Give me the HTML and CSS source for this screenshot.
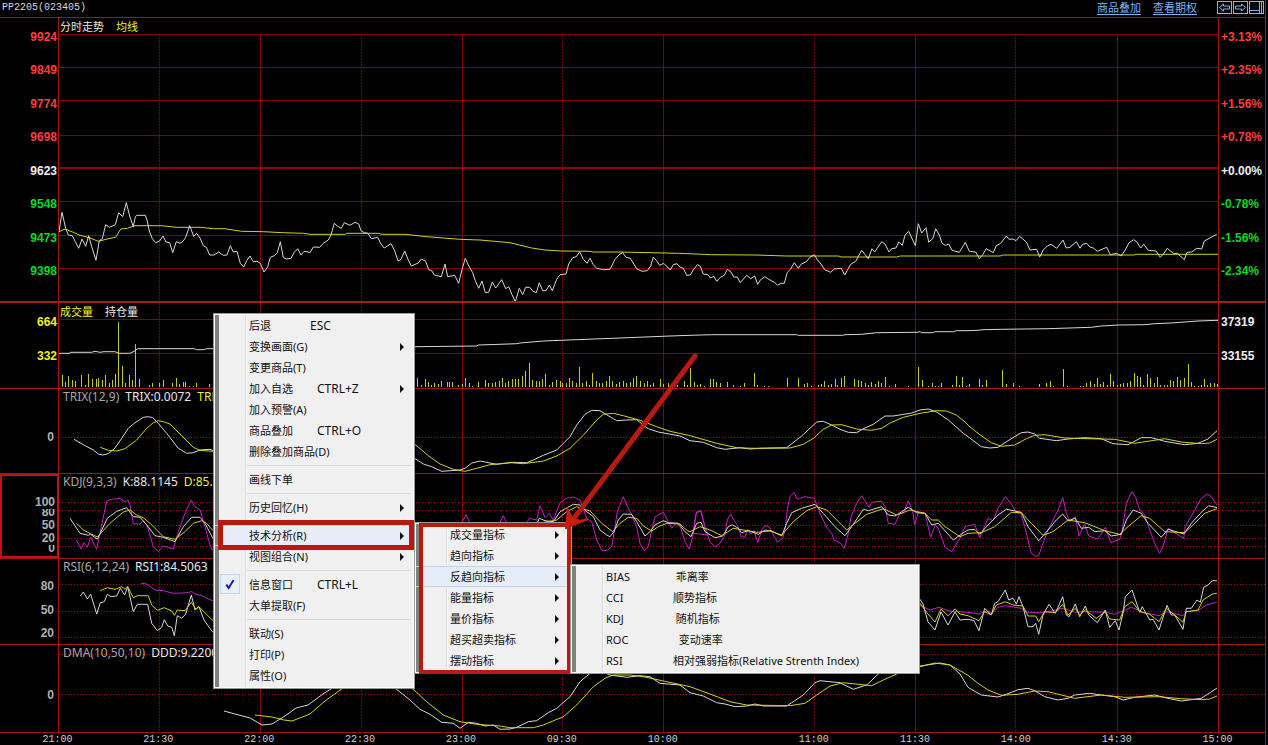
FILE: index.html
```
<!DOCTYPE html>
<html lang="zh-CN">
<head>
<meta charset="utf-8">
<title>PP2205 分时走势</title>
<link rel="stylesheet" href="styles.css">
</head>
<body>
<main class="terminal">
  <header class="topbar">
    <h1 class="contract">PP2205(023405)</h1>
    <nav class="links">
      <a href="#overlay">商品叠加</a>
      <a href="#options">查看期权</a>
    </nav>
    <div class="tools">
      <button class="tool" aria-label="左移"><svg viewBox="0 0 15 13"><rect x=".5" y=".5" width="14" height="12"/><path d="M2.5 6.5 6.500 3v2h6v3h-6v2z"/></svg></button>
      <button class="tool" aria-label="右移"><svg viewBox="0 0 15 13"><rect x=".5" y=".5" width="14" height="12"/><path d="M12.500 6.500 8.500 3v2h-6v3h6v2z"/></svg></button>
      <button class="tool" aria-label="侧栏"><svg viewBox="0 0 15 13"><rect x=".5" y=".5" width="14" height="12"/><path d="M1 9.500h9M10.500 1v11M12.500 1v11"/></svg></button>
    </div>
  </header>

  <section class="panel panel-price">
    <div class="axis axis-left">
      <span class="up">9924</span><span class="up">9849</span><span class="up">9774</span><span class="up">9698</span><span class="flat">9623</span><span class="down">9548</span><span class="down">9473</span><span class="down">9398</span>
    </div>
    <svg class="plot" id="price" viewBox="59 18 1159 283" preserveAspectRatio="none">
      <path class="grid" d="M59 34.500H1218M59 67.500H1218M59 100.500H1218M59 135.500H1218M59 201.500H1218M59 235.500H1218M59 268.500H1218"/>
      <path class="grid base" d="M59 167.500H1218"/>
      <path class="grid" d="M260.500 34V301M462.500 34V301M663.500 34V301M915.500 34V301M1117.500 34V301"/>
      <path class="grid minor" d="M159.500 34V301M361.500 34V301M562.500 34V301M814.500 34V301M1015.500 34V301"/>
    </svg>
    <p class="legend cjk"><span>分时走势</span><span class="yellow">均线</span></p>
    <div class="axis axis-right">
      <span class="up">+3.13%</span><span class="up">+2.35%</span><span class="up">+1.56%</span><span class="up">+0.78%</span><span class="flat">+0.00%</span><span class="down">-0.78%</span><span class="down">-1.56%</span><span class="down">-2.34%</span>
    </div>
  </section>

  <section class="panel panel-volume">
    <div class="axis axis-left"><span class="yellow">664</span><span class="yellow">332</span></div>
    <svg class="plot" id="volume" viewBox="59 303 1159 85" preserveAspectRatio="none">
      <path class="grid" d="M59 319.500H1218M59 353.500H1218"/>
      <path class="grid" d="M260.500 303V388M462.500 303V388M663.500 303V388M915.500 303V388M1117.500 303V388"/>
      <path class="grid minor" d="M159.500 303V388M361.500 303V388M562.500 303V388M814.500 303V388M1015.500 303V388"/>
    </svg>
    <p class="legend cjk"><span class="yellow">成交量</span><span>持仓量</span></p>
    <div class="axis axis-right"><span class="flat">37319</span><span class="flat">33155</span></div>
  </section>

  <section class="panel panel-trix">
    <div class="axis axis-left study"><span>0</span></div>
    <svg class="plot" id="trix" viewBox="59 389 1159 84" preserveAspectRatio="none">
      <path class="grid dots" d="M59 437.500H1218"/>
      <path class="grid" d="M260.500 389V473M462.500 389V473M663.500 389V473M915.500 389V473M1117.500 389V473"/>
      <path class="grid minor" d="M159.500 389V473M361.500 389V473M562.500 389V473M814.500 389V473M1015.500 389V473"/>
    </svg>
    <p class="legend"><span class="name">TRIX(12,9)</span><span>TRIX:0.0072</span><span class="yellow">TRMA</span></p>
    <div class="axis axis-right tail"><svg viewBox="0 389 46 84" preserveAspectRatio="none"><path class="grid dots" d="M0 437.500H46"/></svg></div>
  </section>

  <section class="panel panel-kdj">
    <div class="axis axis-left study selected"><span>100</span><span class="cut">80</span><span class="apart">50</span><span>20</span><span class="cut">0</span></div>
    <svg class="plot" id="kdj" viewBox="59 474 1159 84" preserveAspectRatio="none">
      <path class="grid dots" d="M59 502.500H1218M59 510.500H1218M59 525.500H1218M59 538.500H1218M59 546.500H1218"/>
      <path class="grid" d="M260.500 474V558M462.500 474V558M663.500 474V558M915.500 474V558M1117.500 474V558"/>
      <path class="grid minor" d="M159.500 474V558M361.500 474V558M562.500 474V558M814.500 474V558M1015.500 474V558"/>
    </svg>
    <p class="legend"><span class="name">KDJ(9,3,3)</span><span>K:88.1145</span><span class="yellow">D:85.1</span></p>
    <div class="axis axis-right tail"><svg viewBox="0 474 46 84" preserveAspectRatio="none"><path class="grid dots" d="M0 502.500H46M0 510.500H46M0 525.500H46M0 538.500H46M0 546.500H46"/></svg></div>
  </section>

  <section class="panel panel-rsi">
    <div class="axis axis-left study"><span>80</span><span>50</span><span>20</span></div>
    <svg class="plot" id="rsi" viewBox="59 559 1159 85" preserveAspectRatio="none">
      <path class="grid dots" d="M59 584.500H1218M59 611.500H1218M59 637.500H1218"/>
      <path class="grid" d="M260.500 559V644M462.500 559V644M663.500 559V644M915.500 559V644M1117.500 559V644"/>
      <path class="grid minor" d="M159.500 559V644M361.500 559V644M562.500 559V644M814.500 559V644M1015.500 559V644"/>
    </svg>
    <p class="legend"><span class="name">RSI(6,12,24)</span><span>RSI1:84.5063</span><span class="yellow">RSI2</span></p>
    <div class="axis axis-right tail"><svg viewBox="0 559 46 85" preserveAspectRatio="none"><path class="grid dots" d="M0 584.500H46M0 611.500H46M0 637.500H46"/></svg></div>
  </section>

  <section class="panel panel-dma">
    <div class="axis axis-left study"><span>0</span></div>
    <svg class="plot" id="dma" viewBox="59 645 1159 87" preserveAspectRatio="none">
      <path class="grid dots" d="M59 654.500H1218M59 694.500H1218"/>
      <path class="grid" d="M260.500 645V732M462.500 645V732M663.500 645V732M915.500 645V732M1117.500 645V732"/>
      <path class="grid minor" d="M159.500 645V732M361.500 645V732M562.500 645V732M814.500 645V732M1015.500 645V732"/>
    </svg>
    <p class="legend"><span class="name">DMA(10,50,10)</span><span>DDD:9.2200</span></p>
    <div class="axis axis-right tail"><svg viewBox="0 645 46 87" preserveAspectRatio="none"><path class="grid dots" d="M0 654.500H46M0 694.500H46"/></svg></div>
  </section>

  <footer class="times">
    <time>21:00</time><time>21:30</time><time>22:00</time><time>22:30</time><time>23:00</time><time>09:30</time><time>10:00</time><time class="after-break">11:00</time><time>11:30</time><time>14:00</time><time>14:30</time><time>15:00</time>
  </footer>
</main>

<div class="menu menu-main" role="menu">
  <button class="item" role="menuitem"><span>后退</span><kbd class="far">ESC</kbd></button>
  <button class="item more" role="menuitem"><span>变换画面(G)</span></button>
  <button class="item" role="menuitem"><span>变更商品(T)</span></button>
  <button class="item more" role="menuitem"><span>加入自选</span><kbd>CTRL+Z</kbd></button>
  <button class="item" role="menuitem"><span>加入预警(A)</span></button>
  <button class="item" role="menuitem"><span>商品叠加</span><kbd>CTRL+O</kbd></button>
  <button class="item" role="menuitem"><span>删除叠加商品(D)</span></button>
  <hr>
  <button class="item" role="menuitem"><span>画线下单</span></button>
  <hr>
  <button class="item more" role="menuitem"><span>历史回忆(H)</span></button>
  <hr>
  <button class="item more active marked" role="menuitem"><span>技术分析(R)</span></button>
  <button class="item more" role="menuitem"><span>视图组合(N)</span></button>
  <hr>
  <button class="item" role="menuitemcheckbox" aria-checked="true"><svg class="tick" viewBox="0 0 20 20"><path d="M6 10.500 8.500 14.500 14 5.500"/></svg><span>信息窗口</span><kbd>CTRL+L</kbd></button>
  <button class="item" role="menuitem"><span>大单提取(F)</span></button>
  <hr>
  <button class="item" role="menuitem"><span>联动(S)</span></button>
  <button class="item" role="menuitem"><span>打印(P)</span></button>
  <button class="item" role="menuitem"><span>属性(O)</span></button>
</div>

<div class="menu menu-sub" role="menu">
  <button class="item more" role="menuitem"><span>成交量指标</span></button>
  <button class="item more" role="menuitem"><span>趋向指标</span></button>
  <button class="item more active" role="menuitem"><span>反趋向指标</span></button>
  <button class="item more" role="menuitem"><span>能量指标</span></button>
  <button class="item more" role="menuitem"><span>量价指标</span></button>
  <button class="item more" role="menuitem"><span>超买超卖指标</span></button>
  <button class="item more" role="menuitem"><span>摆动指标</span></button>
</div>

<div class="menu menu-leaf" role="menu">
  <button class="item" role="menuitem"><span class="code">BIAS</span><span> 乖离率</span></button>
  <button class="item" role="menuitem"><span class="code">CCI</span><span>顺势指标</span></button>
  <button class="item" role="menuitem"><span class="code">KDJ</span><span> 随机指标</span></button>
  <button class="item" role="menuitem"><span class="code">ROC</span><span>  变动速率</span></button>
  <button class="item" role="menuitem"><span class="code">RSI</span><span>相对强弱指标(Relative Strenth Index)</span></button>
</div>

<svg class="pointer" viewBox="0 0 140 184" aria-hidden="true">
  <path class="shaft" d="M133 9 13 170"/>
  <path class="head" d="M4 181 6 163 10 171 18 174 26 172 16 176z"/>
</svg>

<script src="charts.js"></script>
</body>
</html>
```
FILE: styles.css
```
* { box-sizing: border-box; }
html, body { height: 100%; }
body {
  margin: 0;
  background: #000;
  color: #e8e8e8;
  font: 12px/14px "Noto Sans", "Noto Sans CJK SC", sans-serif;
  overflow: hidden;
  position: relative;
}
p, h1 { margin: 0; }
button { font: inherit; color: inherit; padding: 0; border: 0; background: none; }

.terminal {
  display: grid;
  grid-template-rows: 18px 285fr 86fr 85fr 85fr 86fr 88fr 12px;
  grid-template-columns: minmax(0, 1fr);
  height: 100%;
  min-height: 600px;
  margin-right: 2px;
  border-right: 1px solid #b01414;
}

.topbar {
  display: flex;
  align-items: center;
  padding: 0 1px 2px 2px;
  border-bottom: 1px solid #a01414;
}
.contract {
  flex: 1;
  font: 10px/14px "Liberation Mono", monospace;
  color: #d8d8d8;
}
.links { display: flex; gap: 12px; margin-right: 20px; }
.links a { color: #7db4f0; font-size: 11px; text-underline-offset: 2px; }
.tools { display: flex; gap: 1px; }
.tool { width: 15px; height: 13px; display: block; }
.tool svg { display: block; width: 15px; height: 13px; fill: none; stroke: #82b4ea; }

.panel {
  display: grid;
  grid-template-columns: 59px minmax(0, 1fr) 47px;
  grid-template-rows: minmax(0, 1fr);
  min-height: 0;
  border-bottom: 1px solid #a01414;
}
.panel-price { border-bottom: 2px solid #a02020; }

.plot { grid-area: 1 / 2; width: 100%; height: 100%; display: block; }
.legend {
  grid-area: 1 / 2;
  display: flex;
  gap: 6px;
  padding-left: 4px;
  line-height: 16px;
  white-space: nowrap;
  align-self: start;
}
.legend.cjk { gap: 12px; padding: 1px 0 0 1px; font-size: 11px; }
.name { color: #a8a8a8; }
.yellow { color: #f0f020; }

.axis {
  display: flex;
  flex-direction: column;
  justify-content: space-between;
  min-height: 0;
  font: bold 12px/14px "Liberation Sans", sans-serif;
}
.axis-left { grid-area: 1 / 1; align-items: flex-end; padding-right: 1px; border-right: 1px solid #a01414; }
.axis-right { grid-area: 1 / 3; padding-left: 2px; border-left: 1px solid #a01414; }
.axis-right.tail { padding: 0; }
.tail svg { display: block; width: 100%; height: 100%; }
.study { padding-right: 4px; color: #b0b0b0; justify-content: center; }
.panel-price .axis { padding-top: 12px; padding-bottom: 23px; }
.panel-volume .axis { padding-top: 12px; padding-bottom: 25px; }
.panel-trix .study, .panel-dma .study { padding-top: 12px; }
.panel-rsi .study { justify-content: space-between; padding-top: 20px; padding-bottom: 4px; }
.panel-kdj .study { justify-content: flex-start; padding: 20px 2px 0 0; line-height: 13px; }
.selected { border: 2px solid #c01414; }
.cut { display: flex; align-items: flex-end; height: 8px; line-height: 10px; overflow: hidden; }
.apart { margin-top: 2px; }
.up { color: #ff3c3c; }
.down { color: #00dc1e; }
.flat { color: #f0f0f0; }

.times {
  display: grid;
  grid-template-columns: repeat(7, minmax(0, 2fr)) minmax(0, 3fr) repeat(4, minmax(0, 2fr));
  margin: 0 -3px 0 7px;
  font: 10px/13px "Liberation Mono", monospace;
  color: #d0d0d0;
  text-align: center;
}
.times .after-break { padding-left: 50px; }

.plot path, .tail path { fill: none; vector-effect: non-scaling-stroke; }
.grid { stroke: #860008; shape-rendering: crispEdges; }
.grid.base { stroke: #900008; stroke-width: 2px; }
.grid.minor { stroke: #740008; stroke-dasharray: 2 1; }
.grid.dots { stroke: #a01010; stroke-dasharray: 1 2; }
.curve { stroke-width: 1px; }
.curve.white { stroke: #d8d8d8; }
.curve.gold { stroke: #d2d21e; }
.curve.pink { stroke: #c81ec8; }
.bars { stroke: #c8c81e; stroke-width: 1px; shape-rendering: crispEdges; }

.menu {
  position: absolute;
  color: #101010;
  background: linear-gradient(90deg, #808080 4px, #f0f0f0 4px, #f0f0f0 30px, #dcdcdc 30px, #dcdcdc 31px, #fafafa 31px, #fafafa 32px, #f0f0f0 32px);
  border: 1px solid #fff;
  outline: 1px solid #979797;
  font-size: 11px;
}
.menu-main { left: 214px; top: 314px; width: 200px; padding-bottom: 1px; }
.menu-sub { left: 415px; top: 523px; width: 156px; padding-bottom: 1px; }
.menu-leaf { left: 571px; top: 565px; width: 348px; padding-bottom: 1px; }
.item {
  position: relative;
  display: flex;
  align-items: center;
  width: 100%;
  height: 21px;
  padding-left: 34px;
  white-space: pre;
  text-align: left;
}
.menu hr { height: 1px; margin: 3px 2px 3px 32px; border: 0; background: #d8d8d8; }
.item kbd { font: 12px/14px "Noto Sans", sans-serif; margin-left: 24px; }
.item kbd.far { margin-left: 39px; }
.code { width: 67px; }
.more::after {
  content: "";
  margin-left: auto;
  margin-right: 9px;
  border: 4px solid transparent;
  border-left-color: #101010;
  border-right: 0;
}
.active { background: linear-gradient(90deg, transparent 4px, #e6edf9 4px); box-shadow: inset 0 1px #bcd3f0, inset 0 -1px #bcd3f0; }
.marked::before {
  content: "";
  position: absolute;
  inset: -5px -1px -4px 3px;
  border: 5px solid #b91a10;
}
.menu-sub::after {
  content: "";
  position: absolute;
  inset: -1px -1px -2px 3px;
  border: 4px solid #b91a10;
}
.menu-sub .more::after { margin-right: 11px; }
.tick {
  position: absolute;
  left: 5px;
  top: 0;
  width: 20px;
  height: 20px;
  background: #e8f0fb;
  border: 1px solid #c0d8f4;
  fill: none;
  stroke: #1414a0;
  stroke-width: 2px;
}
.pointer { position: absolute; left: 562px; top: 347px; width: 140px; height: 184px; }
.shaft { fill: none; stroke: #b91a10; stroke-width: 5px; stroke-linecap: round; }
.head { fill: #c81c0e; stroke: #c81c0e; stroke-width: 2px; }
```
FILE: charts.js
```
const NS = "http://www.w3.org/2000/svg";

function add(id, cls, d) {
  const path = document.createElementNS(NS, "path");
  path.setAttribute("class", cls);
  path.setAttribute("d", d);
  document.getElementById(id).appendChild(path);
}

// Each piece is [originX, originY, "x,y x,y ..."], with points in thirds of a unit.
function toPoints([ox, oy, text]) {
  return text.trim().split(/\s+/).map(p => {
    const [x, y] = p.split(",").map(Number);
    return (ox + x / 3).toFixed(1) + " " + (oy + y / 3).toFixed(1);
  });
}
function curve(id, color, ...pieces) {
  add(id, "curve " + color, "M" + pieces.flatMap(toPoints).join("L"));
}
// Bars rise from the bottom of the volume panel; each entry is "x,top".
function bars(ox, oy, text) {
  const d = toPoints([ox, oy, text]).map(p => {
    const [x, y] = p.split(" ");
    return "M" + (Math.floor(x) + 0.5) + " 387V" + Math.round(y);
  });
  add("volume", "bars", d.join(""));
}

curve("price", "gold",
  [0, 0, "177,695 195,687 220,697 240,706 268,713 295,724 325,716 347,712 362,687 382,685 405,677 485,677 530,682 600,682 640,686 675,686 725,694 790,695 850,698 910,700"],
  [310, 170, "0,193 105,193 110,190 205,190 215,193 285,193 350,200 400,204 450,208 510,210 600,218 665,234 705,240 755,243 840,244 850,246 925,246"],
  [620, 170, "0,246 35,247 175,250 275,254 405,255 500,258 655,258 665,261 830,261 840,258 925,258"],
  [930, 170, "0,258 210,258 220,255 610,255 620,253 865,253"]);
curve("price", "white",
  [0, 0, "177,695 186,637 197,685 205,705 217,707 226,725 236,745 246,717 257,739 266,707 275,740 288,781 298,722 307,716 317,674 328,682 346,674 356,638 368,650 379,608 389,648 400,680 406,650 411,646 436,646 441,660 448,693 457,716 467,728 478,724 489,708 498,726 509,728 518,758 529,725 540,730 549,724 557,712 569,677 581,709 590,700 600,714 610,737 619,742 629,765 642,765 656,756 670,766 681,765 691,737 700,756 711,754 721,790 731,801 740,782 750,768 760,785 771,784 781,790 792,816 803,800 811,772 823,767 832,758 841,725 850,772 858,777 873,775 882,758 893,746 903,765 912,754 928,757"],
  [310, 170, "0,248 10,231 29,232 40,220 55,210 63,195 73,160 82,168 94,175 103,158 120,166 135,157 146,162 153,182 163,188 174,190 184,206 203,202 213,222 223,234 243,221 254,242 264,273 273,268 284,243 294,268 304,288 325,279 334,267 347,274 356,299 365,302 373,315 394,320 405,282 413,320 434,316 446,340 455,302 466,265 475,285 488,308 496,332 506,355 516,333 526,368 536,367 547,336 557,354 575,329 587,356 596,350 606,374 616,395 628,355 638,374 647,352 659,352 669,364 679,368 688,338 698,362 708,362 718,345 727,362 740,328 750,314 768,312 776,282 788,263 799,260 809,245 819,266 831,280 840,265 850,284 860,295 881,299 900,298 915,268 928,254"],
  [620, 170, "8,248 18,262 31,265 50,296 66,304 82,302 92,288 100,261 110,272 119,286 131,280 151,300 160,284 171,281 179,291 190,295 200,316 211,315 220,300 232,284 241,289 250,312 264,314 271,324 282,319 290,334 301,322 313,316 322,298 333,306 341,321 352,321 361,338 380,316 392,326 404,318 413,343 421,330 434,320 450,330 463,337 473,346 482,340 493,340 502,307 512,297 523,278 535,295 543,283 560,274 570,262 583,254 592,269 603,282 614,299 632,307 643,297 664,295 674,315 683,299 692,283 707,274 725,241 734,252 745,266 756,236 764,246 785,215 795,222 807,246 815,236 828,234 836,216 847,226 855,196 866,184 886,227 895,161 905,189 918,173 926,217"],
  [930, 170, "8,206 17,176 28,195 36,220 46,226 56,222 66,241 88,247 106,217 118,244 137,246 148,266 158,254 169,236 190,248 198,228 212,220 229,198 237,208 249,207 258,212 269,199 289,216 300,240 320,238 329,261 340,240 352,228 363,223 380,235 399,210 409,234 420,232 439,215 450,235 458,223 470,220 481,232 490,234 502,244 530,232 541,254 560,250 573,258 586,240 597,218 611,209 620,215 632,234 641,223 655,241 678,243 691,262 702,250 712,235 730,250 742,250 763,269 771,247 785,246 800,235 815,237 823,213 840,204 860,193"]);

bars(0, 300, "186,225 196,246 205,228 217,240 226,243 245,225 255,255 265,222 277,237 288,237 295,234 307,240 317,225 328,250 336,240 347,222 356,66 367,198 376,248 388,225 397,240 407,131 418,238 447,255 458,248 478,250 489,241 518,248 529,234 539,252 549,246 557,246 569,258 580,258 590,249 628,252");
bars(410, 340, "23,113 34,135 46,117 55,126 65,134 74,129 85,131 94,122 112,127 117,127 126,127 145,135 158,131 165,114 177,128 186,137 205,127 225,119 235,130 246,130 257,125 267,122 276,115 286,130 295,124 307,117 315,116 325,117 337,108 347,94 358,70 368,121 378,122 388,122 398,117 406,102 418,134 427,127 438,120 450,124 458,130 468,129 477,114 488,124 498,128 508,80 518,130 530,123 537,134 548,99 558,122 568,130 578,128 590,122 599,108 608,122 620,133 629,127 640,122 650,130 661,125 670,114 679,108 690,122 702,130 711,122 722,134 730,130 750,118 760,133 775,128 790,130 802,134 822,122 832,134");
bars(690, 300, "2,205 12,247 21,254 32,252 42,258 61,237 70,237 80,247 92,249 112,247 131,255 152,258 163,250 193,219 202,255 223,258 234,258 293,235 325,233 343,252 352,249 363,258 384,256 395,251 404,244 416,254 424,252 435,238 443,255 455,233 463,228 494,238 506,241 515,244 526,250 536,255 545,247 555,252 566,243 575,250 586,231 597,257 616,253 656,258 685,201 697,241 716,257 727,249 736,257 746,258 755,250 788,255 798,228 808,255 818,231 828,257");
bars(968, 300, "4,253 33,236 44,255 56,241 103,210 115,252 135,249 155,258 214,252 236,250 246,243 257,258 285,207 297,258 338,258 347,258 356,250 367,243 378,252 388,235 397,252 407,247 417,255 428,223 437,243 447,256 458,252 466,248 478,248 487,244 498,219 507,229 518,232 527,255 538,223 547,234 558,250 569,230 578,255 588,256 598,255 608,241 617,244 629,230 637,240 649,234 660,192 669,247 680,258 690,258 700,255 709,236 718,255 727,248 740,250 748,251");
curve("volume", "white",
  [0, 300, "177,160 210,160 211,157 275,157 285,154 300,157 312,155 345,155 357,160 390,160 405,152 413,146 583,146 590,149 610,149 620,146 640,146"],
  [410, 340, "17,20 200,18 205,15 270,13 320,11 330,9 400,3 475,0 630,-6 780,-12"],
  [690, 300, "0,106 65,104 320,104 325,106 458,106 465,104 515,103 560,98 680,97 690,95 695,98 730,98 735,95 790,95 800,92"],
  [968, 300, "0,92 30,91 45,89 100,88 240,86 370,82 400,78 450,75 530,74 560,71 610,69 650,66 690,63 750,61"]);

curve("trix", "white",
  [0, 300, "222,418 250,434 280,450 295,462 308,465 325,461 345,444 365,415 385,385 405,368 430,352 445,350 458,353 475,370 500,400 535,445 560,460 580,458 600,450 630,448 640,452"],
  [410, 340, "17,357 40,372 65,380 95,394 150,390 165,385 185,369 210,363 240,369 260,373 310,367 350,368 370,360 400,346 440,330 480,290 500,255 525,223 545,211 570,212 595,227 620,242 650,240 680,239 700,255 715,266 745,276 810,288"],
  [690, 300, "0,422 40,427 80,443 105,448 150,443 180,447 210,445 290,443 335,408 365,380 380,366 400,364 425,375 450,388 475,397 500,398 520,386 550,373 585,348 610,348 665,339 690,330 715,327 740,336 775,360 820,400"],
  [968, 300, "0,410 40,440 65,444 90,442 120,422 160,398 180,396 200,402 215,415 265,422 300,417 350,413 400,416 435,431 480,434 520,413 550,413 590,424 650,434 690,430 720,417 747,392"]);
curve("trix", "gold",
  [0, 300, "301,442 325,451 350,453 375,446 410,420 440,385 460,368 475,362 490,365 510,372 545,407 580,442 600,451 640,454"],
  [410, 340, "17,315 55,347 90,372 130,388 165,394 200,385 240,374 300,368 340,371 400,363 440,348 480,325 520,286 560,240 580,223 610,220 640,227 690,241 740,260 780,274 835,286"],
  [690, 300, "0,407 80,430 140,443 190,445 300,444 340,433 370,415 400,388 425,375 455,374 500,387 545,391 575,385 600,369 640,352 690,340 740,332 770,333 800,346 828,368"],
  [968, 300, "0,376 30,400 70,428 100,439 140,435 175,416 200,406 230,404 290,414 360,416 440,418 500,430 590,416 640,426 700,431 725,429 747,418"]);

curve("kdj", "pink",
  [0, 300, "229,720 243,747 252,728 262,742 272,712 290,748 300,700 320,603 335,598 360,595 376,606 384,600 390,615 400,672 420,672 430,662 441,675 460,740 475,755 490,738 520,747 530,710 555,640 574,600 585,620 600,630 615,680 630,735 637,750"],
  [410, 340, "140,560 155,550 168,524 180,550 268,552 280,527 292,552 350,550 358,535 380,540 390,497 405,533 418,520 430,540 450,488 470,475 490,471 510,480 530,535 545,545 560,600 575,630 590,632 605,620 615,560 622,515 640,470 650,495 665,525 680,560 690,610 703,632 715,620 725,570 735,530 760,517 775,545 785,565 800,548 812,563 825,605 838,627 848,590 855,540 860,515 872,512 885,560 895,585"],
  [690, 300, "10,700 18,640 33,632 45,685 60,725 75,740 90,730 105,705 112,660 122,642 135,665 145,680 153,710 165,712 172,688 182,702 192,692 203,728 215,690 225,677 237,680 245,695 262,727 278,715 285,690 292,630 300,590 312,577 322,598 345,590 373,595 390,640 412,685 425,700 432,720 450,728 463,745 475,700 483,650 500,610 515,587 537,622 545,607 575,604 585,620 595,670 615,673 630,640 640,640 655,602 668,635 674,673 685,638 705,640 722,712 735,675 745,685 765,742 785,755 810,715 825,680"],
  [968, 300, "0,677 12,675 20,673 35,713 45,690 60,655 75,662 90,625 112,590 130,612 145,638 158,640 170,680 190,760 200,768 212,767 225,730 240,690 255,660 270,630 284,592 295,640 305,665 322,650 333,708 350,672 362,708 390,717 412,682 428,728 455,718 463,690 475,610 492,575 503,592 515,630 530,645 545,690 560,730 575,760 585,740 600,685 615,695 647,715 652,680 680,630 700,595 718,582 730,590 747,615"]);
curve("kdj", "white",
  [0, 300, "210,655 240,700 265,706 272,703 292,718 322,655 350,634 380,623 400,650 420,652 440,675 465,707 490,712 525,725 550,680 575,652 600,652 615,670 637,712"],
  [410, 340, "17,570 380,552 388,535 405,542 430,545 450,515 490,493 510,495 530,515 550,530 570,570 590,585 600,590 612,575 625,540 640,522 665,523 680,545 705,588 720,575 735,555 760,542 775,548 805,550 825,575 843,590"],
  [690, 300, "20,670 33,667 45,695 75,713 98,708 115,680 127,674 145,685 155,698 175,692 205,703 225,690 245,693 275,708 290,670 305,638 335,625 375,613 400,640 435,680 465,707 485,680 520,628 535,632 575,620 595,645 615,648 655,622 680,638 705,640 725,675 745,670 790,720 820,698"],
  [968, 300, "0,690 20,688 35,703 60,675 90,645 115,628 160,637 180,680 212,722 240,690 265,660 284,642 300,662 322,655 340,685 362,682 380,695 410,692 430,708 460,703 475,660 495,630 520,640 540,670 580,712 600,688 647,702 670,670 700,637 722,617 747,623"]);
curve("kdj", "gold",
  [0, 300, "230,670 250,690 292,711 330,670 370,636 390,630 410,645 430,653 450,670 490,710 525,718 555,695 580,670 605,662 620,670 637,690"],
  [410, 340, "17,570 380,552 395,548 440,540 470,515 500,500 540,513 575,550 608,575 630,550 655,532 680,535 700,558 725,573 745,560 770,550 810,552 832,572"],
  [690, 300, "0,695 30,680 60,690 95,707 130,685 200,697 240,693 275,705 310,665 350,632 380,620 410,630 440,660 470,690 495,670 530,643 580,626 620,645 660,630 705,640 725,660 745,660 765,680 810,710"],
  [968, 300, "0,700 40,698 80,680 130,637 160,638 190,670 225,706 255,695 300,660 350,668 410,692 455,703 480,680 520,647 545,655 590,695 650,698 680,670 710,640 747,626"]);

curve("rsi", "pink",
  [0, 540, "423,130 440,132 465,150 490,152 520,160 565,158 575,154 585,162 605,167 637,182"],
  [919, 559, "0,138 33,153 60,145 90,156 120,158"],
  [968, 300, "0,937 33,942 55,933 72,940 90,922 112,917 160,925 180,938 225,938 284,925 322,937 350,935 412,937 440,943 490,922 530,938 573,947 597,935 645,947 655,935 690,932 715,915 747,907"]);
curve("rsi", "white",
  [0, 540, "241,168 250,156 262,177 272,163 290,222 301,188 313,185 322,163 332,170 350,168 361,145 374,165 383,140 400,215 412,193 443,193 455,250 472,272 485,262 493,239 503,258 515,262 523,287 532,227 545,235 557,222 574,165 585,210 597,200 612,240 637,275"],
  [919, 559, "0,117 12,135 27,189 48,213 66,159 87,198 108,159 123,183"],
  [968, 300, "0,958 18,962 33,992 50,925 70,945 80,910 90,905 112,870 122,900 135,895 145,912 153,890 165,920 180,980 195,980 203,970 212,1003 225,945 243,913 262,940 284,890 295,945 303,950 322,912 335,950 352,918 362,945 388,968 412,930 425,982 442,962 453,990 465,940 472,890 492,870 515,937 523,920 545,960 555,958 573,990 597,916 610,945 620,945 645,988 655,925 670,925 687,900 697,907 707,862 720,855 733,842 747,842"]);
curve("rsi", "gold",
  [0, 540, "301,152 322,143 345,148 365,140 375,148 383,140 400,173 412,167 445,167 455,195 472,211 493,203 515,213 523,226 532,210 555,212 574,187 587,207 597,200 637,240"],
  [919, 559, "0,129 27,165 48,189 66,150 87,170 108,150 123,165"],
  [968, 300, "0,947 33,962 50,935 70,945 85,915 112,905 135,915 165,918 180,948 203,948 212,965 230,935 262,938 284,913 300,945 322,925 335,945 352,930 385,955 412,935 425,957 455,960 470,920 492,905 515,935 545,943 573,965 595,925 620,945 645,967 655,935 690,930 705,900 733,882 747,880"]);

curve("dma", "white",
  [224, 645, "0,198 33,207 78,219 114,240 144,237 183,213 216,189 252,180 297,147 363,105 438,84 513,129"],
  [410, 510, "0,570 30,598 60,613 95,637 130,640 150,655 175,637 200,640 225,648 250,645 270,658 300,657 320,652 355,635 380,632 415,608 440,595 480,560 510,515 540,490 570,482 600,495 650,502 690,497 720,500 750,520 810,525 840,548 880,558 920,578 945,582 975,590 1010,588 1035,582 1060,588 1130,588 1145,578 1180,555 1215,518 1230,512 1290,518 1330,538 1370,525 1405,492 1440,478 1530,468 1590,459 1620,465 1650,492"],
  [968, 300, "0,1162 40,1185 90,1191 115,1183 150,1169 180,1165 200,1172 230,1190 270,1200 300,1195 320,1185 365,1180 400,1185 440,1190 465,1200 500,1192 560,1185 600,1195 640,1203 700,1195 720,1182 747,1164"]);
curve("dma", "gold",
  [255, 645, "0,210 51,216 87,225 111,228 165,207 210,168 264,129 375,87 450,117"],
  [410, 510, "12,540 50,575 100,615 150,635 200,643 270,648 300,653 370,653 400,645 460,620 500,585 550,530 585,505 610,495 660,495 700,500 770,515 840,530 900,552 960,575 1010,585 1140,587 1185,580 1220,555 1260,528 1300,518 1385,527 1420,510 1460,492 1530,470 1575,459 1620,465"],
  [968, 300, "0,1126 30,1150 60,1170 100,1186 150,1183 200,1173 240,1175 320,1195 400,1185 470,1192 570,1190 640,1196 700,1199 725,1197 747,1188"]);
```
